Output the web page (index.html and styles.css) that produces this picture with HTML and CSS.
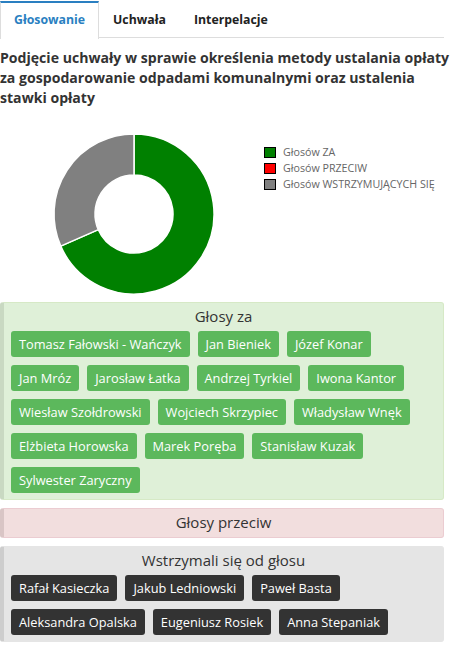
FILE: index.html
```html
<!DOCTYPE html>
<html lang="pl">
<head>
<meta charset="utf-8">
<title>Głosowanie</title>
<link rel="stylesheet" href="styles.css">
</head>
<body>
<div class="page">
  <ul class="tabs">
    <li class="tab active">Głosowanie</li>
    <li class="tab">Uchwała</li>
    <li class="tab">Interpelacje</li>
  </ul>
  <h1 class="title">Podjęcie uchwały w sprawie określenia metody ustalania opłaty za gospodarowanie odpadami komunalnymi oraz ustalenia stawki opłaty</h1>
  <div class="chart">
    <svg class="donut" width="264" height="168" viewBox="0 0 264 168">
      <path d="M134 4 A80 80 0 1 1 60.74 116.13 L98.28 99.66 A39 39 0 1 0 134 45 Z" fill="#008000" stroke="#fff" stroke-width="1.5"/>
      <path d="M60.74 116.13 A80 80 0 0 1 134 4 L134 45 A39 39 0 0 0 98.28 99.66 Z" fill="#808080" stroke="#fff" stroke-width="1.5"/>
    </svg>
    <ul class="legend">
      <li><span class="sw sw-za"></span>Głosów ZA</li>
      <li><span class="sw sw-przeciw"></span>Głosów PRZECIW</li>
      <li><span class="sw sw-wstrz"></span>Głosów WSTRZYMUJĄCYCH SIĘ</li>
    </ul>
  </div>
  <section class="panel panel-za">
    <h2 class="panel-title">Głosy za</h2>
    <div class="badges">
      <span class="badge">Tomasz Fałowski - Wańczyk</span>
      <span class="badge">Jan Bieniek</span>
      <span class="badge">Józef Konar</span>
      <span class="badge">Jan Mróz</span>
      <span class="badge">Jarosław Łatka</span>
      <span class="badge">Andrzej Tyrkiel</span>
      <span class="badge">Iwona Kantor</span>
      <span class="badge">Wiesław Szołdrowski</span>
      <span class="badge">Wojciech Skrzypiec</span>
      <span class="badge">Władysław Wnęk</span>
      <span class="badge">Elżbieta Horowska</span>
      <span class="badge">Marek Poręba</span>
      <span class="badge">Stanisław Kuzak</span>
      <span class="badge">Sylwester Zaryczny</span>
    </div>
  </section>
  <section class="panel panel-przeciw">
    <h2 class="panel-title">Głosy przeciw</h2>
  </section>
  <section class="panel panel-wstrz">
    <h2 class="panel-title">Wstrzymali się od głosu</h2>
    <div class="badges">
      <span class="badge badge-dark">Rafał Kasieczka</span>
      <span class="badge badge-dark">Jakub Ledniowski</span>
      <span class="badge badge-dark">Paweł Basta</span>
      <span class="badge badge-dark">Aleksandra Opalska</span>
      <span class="badge badge-dark">Eugeniusz Rosiek</span>
      <span class="badge badge-dark">Anna Stepaniak</span>
    </div>
  </section>
</div>
</body>
</html>
```
FILE: styles.css
```css
* { box-sizing: border-box; }
html, body { margin: 0; padding: 0; background: #fff; }
body { font-family: "Open Sans", "Noto Sans", sans-serif; color: #333; }
.page { width: 450px; }
.tabs {
  list-style: none; margin: 0 6px 0 0; padding: 1px 0 0 0;
  display: flex; border-bottom: 1px solid #ddd; height: 38px;
}
.tab {
  padding: 0 14px; font-size: 12.3px; font-weight: 700; color: #222;
  line-height: 34px; height: 37px; border-top: 2px solid transparent;
}
.tab.active {
  color: #2a7fc1; border-top-color: #2a7fc1;
  border-left: 1px solid #ddd; border-right: 1px solid #ddd;
  background: #fff; height: 38px; padding: 0 13px;
}
.title {
  margin: 10px 0 0 0; font-size: 14.1px; font-weight: 700; line-height: 20px; color: #333;
}
.chart { display: flex; margin-top: 22px; height: 172px; }
.donut { display: block; flex: none; }
.legend {
  list-style: none; margin: 14px 0 0 0; padding: 0;
  font-size: 10.7px; color: #666;
}
.legend li { display: flex; align-items: center; height: 16px; line-height: 16px; }
.sw { width: 12px; height: 11px; border: 1px solid #000; margin-right: 7px; flex: none; }
.sw-za { background: #008000; }
.sw-przeciw { background: #ff0000; }
.sw-wstrz { background: #808080; }
.panel {
  border: 1px solid; border-left-width: 4px; border-radius: 3px;
  padding: 3px 7px 6px 7px; margin: 0 6px 8px 0;
}
.panel-za { background: #dff0d8; border-color: #d6e9c6; border-left-color: #c9d9c2; }
.panel-przeciw { background: #f2dede; border-color: #ebccd1; border-left-color: #d9c5c5; padding-bottom: 5px; }
.panel-wstrz { background: #e5e5e5; border-color: #e5e5e5; border-left-color: #cdcdcd; }
.panel-title {
  margin: 0; text-align: center; font-size: 15px; font-weight: 400; line-height: 20px; color: #333;
}
.badges { display: flex; flex-wrap: wrap; gap: 8px; margin-top: 5px; }
.badge {
  display: inline-block; background: #5cb85c; color: #fff; font-size: 12.8px;
  height: 26px; line-height: 26px; padding: 0 8px; border-radius: 3px; white-space: nowrap;
}
.badge-dark { background: #333; }
```
